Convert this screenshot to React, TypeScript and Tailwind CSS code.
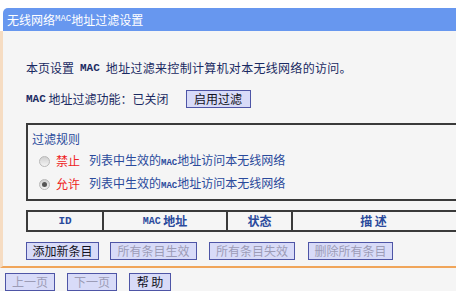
import React from "react";

const font = { fontFamily: '"Noto Sans CJK SC", "Noto Sans", sans-serif' };
const mono = { fontFamily: '"Liberation Mono", "DejaVu Sans Mono", monospace' };

function Mac({ className = "text-[11px] font-bold" }: { className?: string }) {
  return (
    <span style={mono} className={className}>
      MAC
    </span>
  );
}

function Btn({
  children,
  disabled,
  className = "",
}: {
  children: React.ReactNode;
  disabled?: boolean;
  className?: string;
}) {
  return (
    <div
      className={`flex h-[18px] items-center justify-center border border-[#4e55a6] bg-[#d8dbf8] text-[12px] leading-none ${
        disabled ? "text-[#9c9cb6]" : "text-[#111122]"
      } ${className}`}
    >
      {children}
    </div>
  );
}

function Radio({ checked }: { checked?: boolean }) {
  return (
    <div className="flex h-[11px] w-[11px] items-center justify-center rounded-full border border-[#b8b8b8] bg-gradient-to-b from-[#d0d0d0] to-[#f4f4f4]">
      {checked && <div className="h-[5px] w-[5px] rounded-full bg-[#555]" />}
    </div>
  );
}

function RuleRow({ label, checked }: { label: string; checked?: boolean }) {
  return (
    <div className="flex h-[18px] items-center">
      <div className="ml-[7px] mr-[6px]">
        <Radio checked={checked} />
      </div>
      <span className="text-[#ee2222]">{label}</span>
      <span className="ml-[9px] text-[#2a4a9c]">
        列表中生效的<Mac className="text-[9px] font-bold" />地址访问本无线网络
      </span>
    </div>
  );
}

export default function App() {
  return (
    <div
      style={font}
      className="h-[294px] w-[456px] overflow-hidden bg-white text-[12px] text-[#1a2a62]"
    >
      <div className="h-[8px]" />
      <div className="ml-[3px] flex h-[23px] w-[460px] items-center rounded-tl-[5px] bg-[#6797ef] pl-[4px] text-[12px] leading-none text-white">
        <span className="text-[12px]">无线网络</span>
        <span style={mono} className="text-[9px]">MAC</span>
        <span className="text-[12px]">地址过滤设置</span>
      </div>
      <div className="h-[237px] w-[460px] border-b-2 border-l-[3px] border-b-[#f0a55a] border-l-[#f6dcc2] bg-[#f5f5f5] pl-[23px] pt-[28px]">
        <div className="flex h-[18px] items-center">
          <span>本页设置</span>
          <Mac className="mx-[6px] text-[11px] font-bold" />
          <span className="tracking-[0.3px]">地址过滤来控制计算机对本无线网络的访问。</span>
        </div>
        <div className="mt-[13px] flex h-[18px] items-center">
          <Mac />
          <span>&nbsp;地址过滤功能：已关闭</span>
          <Btn className="ml-[17px] w-[65px]">启用过滤</Btn>
        </div>
        <div className="mt-[15px] h-[78px] border-2 border-[#3a3a3a] pl-[4px]">
          <div className="mt-[6px] h-[16px] leading-[16px] text-[#2a4a9c]">过滤规则</div>
          <div className="mt-[5px]">
            <RuleRow label="禁止" />
          </div>
          <div className="mt-[5px]">
            <RuleRow label="允许" checked />
          </div>
        </div>
        <div className="mt-[9px] flex h-[22px] border-2 border-[#3a3a3a] font-bold text-[#2a4a9c]">
          <div className="flex w-[76px] items-center justify-center border-r-2 border-[#3a3a3a]">
            <span style={mono} className="text-[11px]">ID</span>
          </div>
          <div className="flex w-[124px] items-center justify-center border-r-2 border-[#3a3a3a]">
            <Mac className="text-[10px] font-bold" />
            <span>&nbsp;地址</span>
          </div>
          <div className="flex w-[65px] items-center justify-center border-r-2 border-[#3a3a3a]">
            状态
          </div>
          <div className="flex w-[161px] items-center justify-center">描&nbsp;述</div>
        </div>
        <div className="mt-[10px] flex items-center">
          <Btn className="w-[73px]">添加新条目</Btn>
          <Btn disabled className="ml-[11px] w-[87px]">所有条目生效</Btn>
          <Btn disabled className="ml-[12px] w-[86px]">所有条目失效</Btn>
          <Btn disabled className="ml-[13px] w-[85px]">删除所有条目</Btn>
        </div>
      </div>
      <div className="flex items-center bg-[#f5f5f5] pl-[5px] pt-[5px]">
        <Btn disabled className="w-[50px]">上一页</Btn>
        <Btn disabled className="ml-[12px] w-[50px]">下一页</Btn>
        <Btn className="ml-[12px] w-[42px]">帮&nbsp;助</Btn>
      </div>
    </div>
  );
}
